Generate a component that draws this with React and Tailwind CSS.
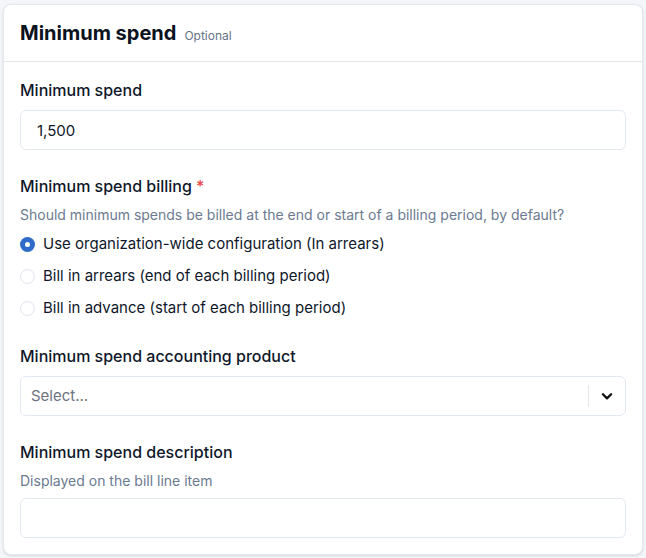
import React, { useState } from 'react';

const options = [
  'Use organization-wide configuration (In arrears)',
  'Bill in arrears (end of each billing period)',
  'Bill in advance (start of each billing period)',
];

const MinimumSpend = () => {
  const [billing, setBilling] = useState(0);

  return (
    <div className="min-h-screen bg-[#f4f6f9] px-[3px] py-1" style={{ fontFamily: 'Inter, "Noto Sans", sans-serif' }}>
      <div className="bg-white rounded-lg border border-[#e5e8ee] shadow-sm">
        <div className="px-4 py-[14px] border-b border-[#e2e5ec] flex items-baseline gap-2">
          <h2 className="text-[20px] leading-7 font-bold text-[#0b1220]">Minimum spend</h2>
          <span className="text-xs text-[#66738a]">Optional</span>
        </div>

        <div className="px-4 pt-4 pb-4 flex flex-col gap-6">
          <div className="flex flex-col gap-2">
            <label className="text-base leading-6 font-medium text-[#0f172a]">Minimum spend</label>
            <input
              type="text"
              defaultValue="1,500"
              className="h-10 w-full rounded-md border border-[#e2e8f0] px-4 text-[15px] text-[#0f172a] outline-none"
            />
          </div>

          <div className="flex flex-col">
            <label className="text-base leading-6 font-medium text-[#0f172a]">
              Minimum spend billing <span className="text-[#ef4444]">*</span>
            </label>
            <p className="mt-[7px] text-[14px] leading-5 text-[#6b7a90]">
              Should minimum spends be billed at the end or start of a billing period, by default?
            </p>
            <div className="mt-[7px] flex flex-col gap-2">
              {options.map((opt, i) => (
                <label key={i} className="flex items-center gap-2 h-6 cursor-pointer" onClick={() => setBilling(i)}>
                  {billing === i ? (
                    <span className="w-[15px] h-[15px] rounded-full bg-[#2f6bc8] flex items-center justify-center">
                      <span className="w-[5px] h-[5px] rounded-full bg-white" />
                    </span>
                  ) : (
                    <span className="w-[15px] h-[15px] rounded-full border border-[#dfe3ea] bg-white" />
                  )}
                  <span className="text-[15px] text-[#0f172a]">{opt}</span>
                </label>
              ))}
            </div>
          </div>

          <div className="flex flex-col gap-2">
            <label className="text-base leading-6 font-medium text-[#0f172a]">Minimum spend accounting product</label>
            <div className="h-10 w-full rounded-md border border-[#e2e8f0] flex items-center">
              <span className="flex-1 pl-[10px] text-[15px] text-[#6b7280]">Select...</span>
              <span className="w-px h-[22px] bg-[#e2e5ea]" />
              <span className="w-9 flex items-center justify-center">
                <svg width="14" height="14" viewBox="0 0 24 24" fill="none" stroke="#111" strokeWidth="4" strokeLinecap="round" strokeLinejoin="round">
                  <path d="M5 9l7 7 7-7" />
                </svg>
              </span>
            </div>
          </div>

          <div className="flex flex-col">
            <label className="text-base leading-6 font-medium text-[#0f172a]">Minimum spend description</label>
            <p className="mt-[7px] text-[14px] leading-5 text-[#6b7a90]">Displayed on the bill line item</p>
            <input
              type="text"
              className="mt-[7px] h-10 w-full rounded-md border border-[#e2e8f0] px-4 text-[15px] outline-none"
            />
          </div>
        </div>
      </div>
    </div>
  );
};

export default MinimumSpend;
